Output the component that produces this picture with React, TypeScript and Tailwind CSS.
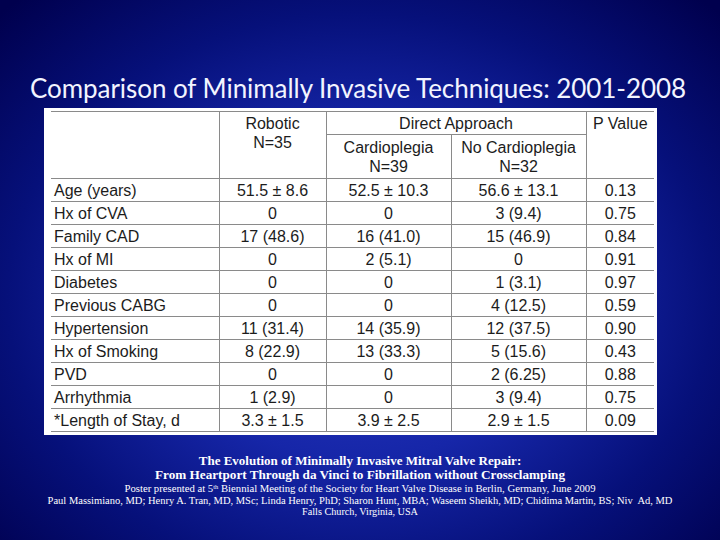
import React from "react";

const rows: [string, string, string, string, string][] = [
  ["Age (years)", "51.5 ± 8.6", "52.5 ± 10.3", "56.6 ± 13.1", "0.13"],
  ["Hx of CVA", "0", "0", "3 (9.4)", "0.75"],
  ["Family CAD", "17 (48.6)", "16 (41.0)", "15 (46.9)", "0.84"],
  ["Hx of MI", "0", "2 (5.1)", "0", "0.91"],
  ["Diabetes", "0", "0", "1 (3.1)", "0.97"],
  ["Previous CABG", "0", "0", "4 (12.5)", "0.59"],
  ["Hypertension", "11 (31.4)", "14 (35.9)", "12 (37.5)", "0.90"],
  ["Hx of Smoking", "8 (22.9)", "13 (33.3)", "5 (15.6)", "0.43"],
  ["PVD", "0", "0", "2 (6.25)", "0.88"],
  ["Arrhythmia", "1 (2.9)", "0", "3 (9.4)", "0.75"],
  ["*Length of Stay, d", "3.3 ± 1.5", "3.9 ± 2.5", "2.9 ± 1.5", "0.09"],
];

export default function App() {
  return (
    <div className="w-[720px] h-[540px] overflow-hidden flex flex-col items-center bg-[radial-gradient(ellipse_70%_75%_at_50%_55%,#2a3bc4_0%,#1626a8_40%,#06107a_70%,#00004e_100%)]">
      <h1 className="pt-[73px] text-[26px] leading-[31px] text-[#f2f4ff] font-['Lato',sans-serif] tracking-[-0.05px] whitespace-nowrap ml-[-4px]">
        Comparison of Minimally Invasive Techniques: 2001-2008
      </h1>
      <div className="mt-[4px] bg-white pl-[7px] pr-[3px] pt-[3px] pb-[3px] ml-[-19px]">
        <table className="border-collapse text-[16px] text-[#1c1c1c] font-['Liberation_Sans',Arial,sans-serif] leading-[19px]">
          <colgroup>
            <col className="w-[168px]" />
            <col className="w-[107px]" />
            <col className="w-[125px]" />
            <col className="w-[135px]" />
            <col className="w-[68px]" />
          </colgroup>
          <thead>
            <tr className="h-[23px]">
              <td rowSpan={2} className="border-t border-b border-[#8a8a8a] border-r"></td>
              <td rowSpan={2} className="border-t border-b border-r border-[#8a8a8a] text-center align-top pt-[2px]">
                Robotic
                <br />
                N=35
              </td>
              <td colSpan={2} className="border-t border-b border-r border-[#8a8a8a] text-center align-top pt-[2px]">
                Direct Approach
              </td>
              <td rowSpan={2} className="border-t border-b border-[#8a8a8a] text-center align-top pt-[2px]">
                P Value
              </td>
            </tr>
            <tr className="h-[44px]">
              <td className="border-b border-r border-[#8a8a8a] text-center align-top pt-[3px]">
                Cardioplegia
                <br />
                N=39
              </td>
              <td className="border-b border-r border-[#8a8a8a] text-center align-top pt-[3px]">
                No Cardioplegia
                <br />
                N=32
              </td>
            </tr>
          </thead>
          <tbody>
            {rows.map((r, i) => (
              <tr key={i} className="h-[23px]">
                <td className="border-b border-r border-[#8a8a8a] pl-[3px] p-0 whitespace-nowrap">{r[0]}</td>
                <td className="border-b border-r border-[#8a8a8a] text-center p-0 whitespace-nowrap">{r[1]}</td>
                <td className="border-b border-r border-[#8a8a8a] text-center p-0 whitespace-nowrap">{r[2]}</td>
                <td className="border-b border-r border-[#8a8a8a] text-center p-0 whitespace-nowrap">{r[3]}</td>
                <td className="border-b border-[#8a8a8a] text-center p-0 whitespace-nowrap">{r[4]}</td>
              </tr>
            ))}
          </tbody>
        </table>
      </div>
      <div className="mt-[19px] flex flex-col items-center text-white font-['Liberation_Serif','Times_New_Roman',serif] whitespace-nowrap">
        <div className="text-[13px] leading-[14px] font-bold">The Evolution of Minimally Invasive Mitral Valve Repair:</div>
        <div className="text-[13.2px] leading-[14px] font-bold">From Heartport Through da Vinci to Fibrillation without Crossclamping</div>
        <div className="text-[10.7px] leading-[13px]">
          Poster presented at 5<sup className="text-[6.5px]">th</sup> Biennial Meeting of the Society for Heart Valve Disease in Berlin, Germany, June 2009
        </div>
        <div className="text-[10.5px] leading-[11px]">
          Paul Massimiano, MD; Henry A. Tran, MD, MSc; Linda Henry, PhD; Sharon Hunt, MBA; Waseem Sheikh, MD; Chidima Martin, BS; Niv&nbsp; Ad, MD
        </div>
        <div className="text-[10.2px] leading-[11px]">Falls Church, Virginia, USA</div>
      </div>
    </div>
  );
}
